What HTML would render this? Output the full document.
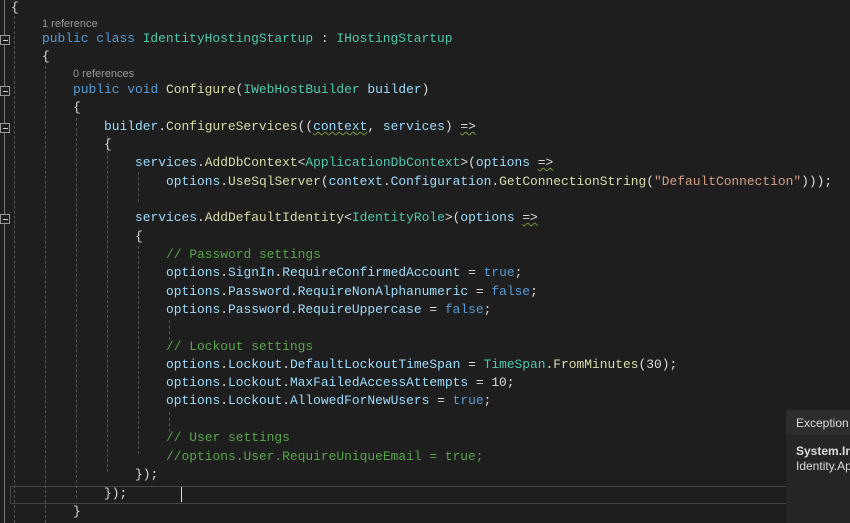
<!DOCTYPE html>
<html><head><meta charset="utf-8"><style>
html,body{margin:0;padding:0;width:850px;height:523px;overflow:hidden;background:#1e1e1e}
.l{position:absolute;height:18px;line-height:18px;font-family:"Liberation Mono",monospace;font-size:12.92px;color:#dcdcdc;white-space:pre}
.cl{position:absolute;font-family:"Liberation Sans",sans-serif;font-size:11px;color:#999;line-height:12px}
.k{color:#569cd6}.t{color:#4ec9b0}.m{color:#dcdcaa}.p{color:#9cdcfe}.s{color:#d69d85}.c{color:#57a64a}
.sq{text-decoration:underline wavy #7a9a3a;text-decoration-thickness:1px}
.g{position:absolute;width:0;border-left:1px dashed #555}
.box{position:absolute;left:0;width:8px;height:8px;border:1px solid #999;background:#1e1e1e}
.box:after{content:"";position:absolute;left:2px;top:4px;width:5px;height:1px;background:#ccc}
</style></head><body>
<div style="position:absolute;left:4px;top:0;width:1px;height:523px;background:#777"></div>
<div class="g" style="left:14px;top:16px;height:507px"></div>
<div class="g" style="left:45px;top:66px;height:457px"></div>
<div class="g" style="left:76px;top:118px;height:380px"></div>
<div class="g" style="left:107px;top:136px;height:336px"></div>
<div class="g" style="left:138px;top:172px;height:30px"></div>
<div class="g" style="left:138px;top:246px;height:208px"></div>
<div class="g" style="left:169px;top:320px;height:20px"></div>
<div class="g" style="left:169px;top:412px;height:20px"></div>
<div class="box" style="top:35px"></div>
<div class="box" style="top:86px"></div>
<div class="box" style="top:123px"></div>
<div class="box" style="top:214px"></div>
<div style="position:absolute;left:10px;top:486px;width:775px;height:16px;border:1px solid #464646"></div>
<div style="position:absolute;left:181px;top:487px;width:1px;height:15px;background:#ddd"></div>

<div class="l" style="left:11px;top:-1px">{</div>
<div class="cl" style="left:42px;top:18px">1 reference</div>
<div class="l" style="left:42px;top:30px"><span class="k">public class </span><span class="t">IdentityHostingStartup</span> : <span class="t">IHostingStartup</span></div>
<div class="l" style="left:42px;top:48px">{</div>
<div class="cl" style="left:73px;top:68px">0 references</div>
<div class="l" style="left:73px;top:81px"><span class="k">public void </span><span class="m">Configure</span>(<span class="t">IWebHostBuilder</span> <span class="p">builder</span>)</div>
<div class="l" style="left:73px;top:99px">{</div>
<div class="l" style="left:104px;top:118px"><span class="p">builder</span>.<span class="m">ConfigureServices</span>((<span class="p sq">context</span>, <span class="p">services</span>) <span class="sq">=&gt;</span></div>
<div class="l" style="left:104px;top:136px">{</div>
<div class="l" style="left:135px;top:154px"><span class="p">services</span>.<span class="m">AddDbContext</span>&lt;<span class="t">ApplicationDbContext</span>&gt;(<span class="p">options</span> <span class="sq">=&gt;</span></div>
<div class="l" style="left:166px;top:173px"><span class="p">options</span>.<span class="m">UseSqlServer</span>(<span class="p">context</span>.<span class="p">Configuration</span>.<span class="m">GetConnectionString</span>(<span class="s">"DefaultConnection"</span>)));</div>
<div class="l" style="left:135px;top:209px"><span class="p">services</span>.<span class="m">AddDefaultIdentity</span>&lt;<span class="t">IdentityRole</span>&gt;(<span class="p">options</span> <span class="sq">=&gt;</span></div>
<div class="l" style="left:135px;top:228px">{</div>
<div class="l" style="left:166px;top:246px"><span class="c">// Password settings</span></div>
<div class="l" style="left:166px;top:264px"><span class="p">options</span>.<span class="p">SignIn</span>.<span class="p">RequireConfirmedAccount</span> = <span class="k">true</span>;</div>
<div class="l" style="left:166px;top:283px"><span class="p">options</span>.<span class="p">Password</span>.<span class="p">RequireNonAlphanumeric</span> = <span class="k">false</span>;</div>
<div class="l" style="left:166px;top:301px"><span class="p">options</span>.<span class="p">Password</span>.<span class="p">RequireUppercase</span> = <span class="k">false</span>;</div>
<div class="l" style="left:166px;top:338px"><span class="c">// Lockout settings</span></div>
<div class="l" style="left:166px;top:356px"><span class="p">options</span>.<span class="p">Lockout</span>.<span class="p">DefaultLockoutTimeSpan</span> = <span class="t">TimeSpan</span>.<span class="m">FromMinutes</span>(30);</div>
<div class="l" style="left:166px;top:374px"><span class="p">options</span>.<span class="p">Lockout</span>.<span class="p">MaxFailedAccessAttempts</span> = 10;</div>
<div class="l" style="left:166px;top:392px"><span class="p">options</span>.<span class="p">Lockout</span>.<span class="p">AllowedForNewUsers</span> = <span class="k">true</span>;</div>
<div class="l" style="left:166px;top:429px"><span class="c">// User settings</span></div>
<div class="l" style="left:166px;top:448px"><span class="c">//options.User.RequireUniqueEmail = true;</span></div>
<div class="l" style="left:135px;top:466px">});</div>
<div class="l" style="left:104px;top:485px">});</div>
<div class="l" style="left:73px;top:503px">}</div>

<div style="position:absolute;left:786px;top:410px;width:64px;height:113px;background:#252526">
<div style="height:25px;background:#2d2d30;color:#ddd;font-family:'Liberation Sans',sans-serif;font-size:12px;line-height:27px;padding-left:10px">Exception</div>
<div style="padding:9px 0 0 10px;font-family:'Liberation Sans',sans-serif;font-size:12px;color:#ddd;line-height:15px;white-space:nowrap"><b>System.In</b><br>Identity.Ap</div>
</div>
</body></html>
